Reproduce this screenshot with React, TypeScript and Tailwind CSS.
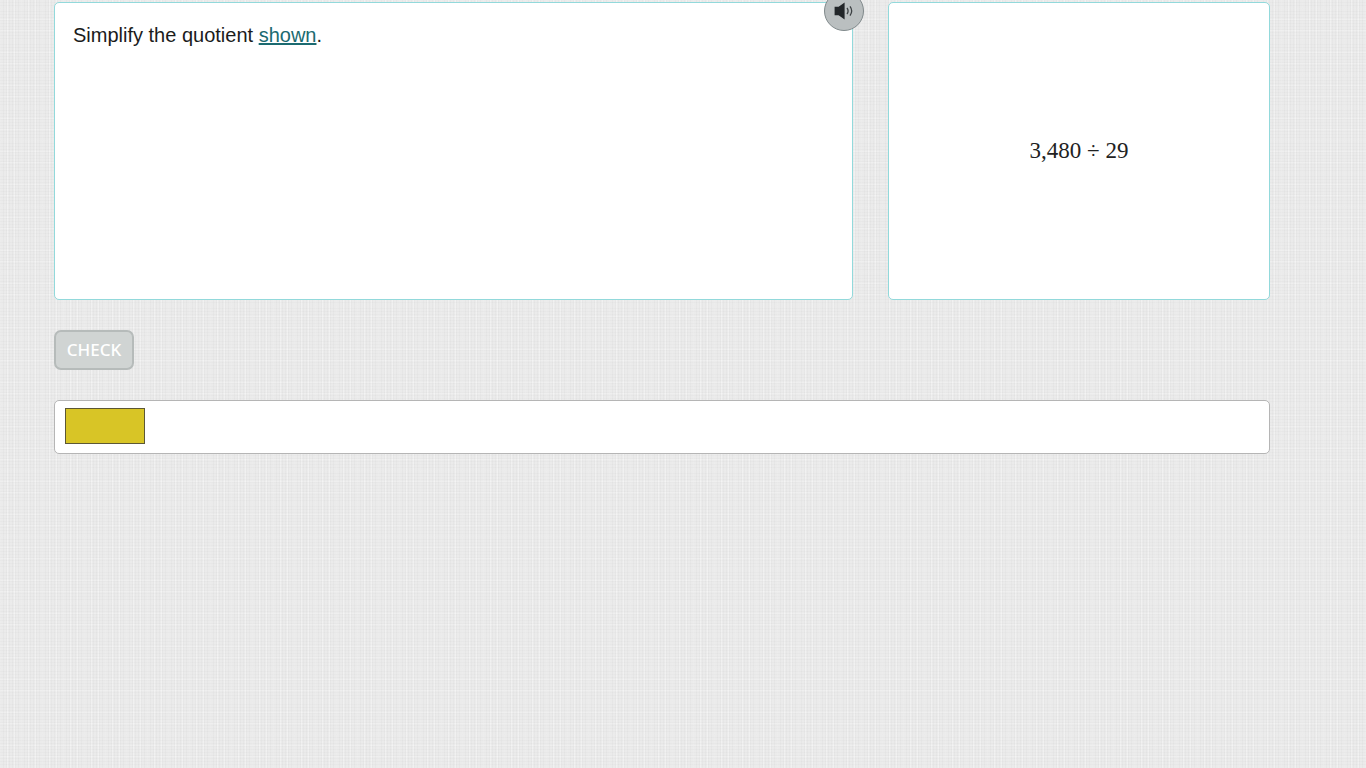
import React from "react";

interface CardProps {
  className?: string;
  children: React.ReactNode;
}

function Card({ className = "", children }: CardProps) {
  return (
    <div
      className={`relative min-h-[298px] rounded-[5px] border border-[#92d9db] bg-white ${className}`}
    >
      {children}
    </div>
  );
}

function SpeakerIcon() {
  return (
    <svg viewBox="0 0 20 18" className="h-[18px] w-5" aria-hidden="true">
      <path d="M0.6 4.8H4.6L10.6 0.4V17.6L4.6 13.2H0.6Z" fill="#222629" />
      <path
        d="M13 6Q15.2 9 13 12M16 4.4Q19.4 9 16 13.6"
        fill="none"
        stroke="#3c4143"
        strokeWidth="1.3"
      />
    </svg>
  );
}

export default function App() {
  return (
    <main className="min-h-screen bg-[#ebebeb] bg-[repeating-linear-gradient(90deg,rgba(0,0,0,0.018)_0px_1px,transparent_1px_3px),repeating-linear-gradient(0deg,rgba(0,0,0,0.014)_0px_1px,transparent_1px_3px),repeating-linear-gradient(90deg,rgba(255,255,255,0.3)_0px_1px,transparent_1px_7px),repeating-linear-gradient(0deg,rgba(255,255,255,0.2)_0px_1px,transparent_1px_11px)] pt-0.5 pr-24 pl-[54px] font-['Liberation_Sans',Arial,sans-serif]">
      {/* Question and figure */}
      <div className="grid grid-cols-[799fr_382fr] gap-[35px]">
        <Card className="px-[18px] py-[18px]">
          <p className="text-xl leading-7 text-[#1b1b1b]">
            Simplify the quotient{" "}
            <a href="#figure" className="text-[#1b6a70] underline">
              shown
            </a>
            .
          </p>
          <button
            type="button"
            aria-label="Read aloud"
            className="absolute -top-3 -right-3 flex size-10 cursor-pointer items-center justify-center rounded-full border border-[#80898b] bg-[#babfc0]"
          >
            <SpeakerIcon />
          </button>
        </Card>
        <Card className="flex items-center justify-center">
          <p
            id="figure"
            className="font-['Liberation_Serif','Times_New_Roman',serif] text-[23px] leading-7 text-[#222222]"
          >
            3,480 ÷ 29
          </p>
        </Card>
      </div>

      {/* Check */}
      <button
        type="button"
        disabled
        className="mt-[30px] block h-10 w-20 rounded-[7px] border-2 border-[#b6bbba] bg-[#d0d4d3] font-['Noto_Sans',sans-serif] text-[17px] leading-6 font-medium text-white"
      >
        CHECK
      </button>

      {/* Answer */}
      <div className="mt-[30px] rounded-[5px] border border-[#b5b5b5] bg-white px-2.5 pt-[7px] pb-[9px]">
        <input
          type="text"
          aria-label="Answer"
          className="block h-9 w-20 border border-[#5c5735] bg-[#d8c526] px-2 text-xl outline-none"
        />
      </div>
    </main>
  );
}
